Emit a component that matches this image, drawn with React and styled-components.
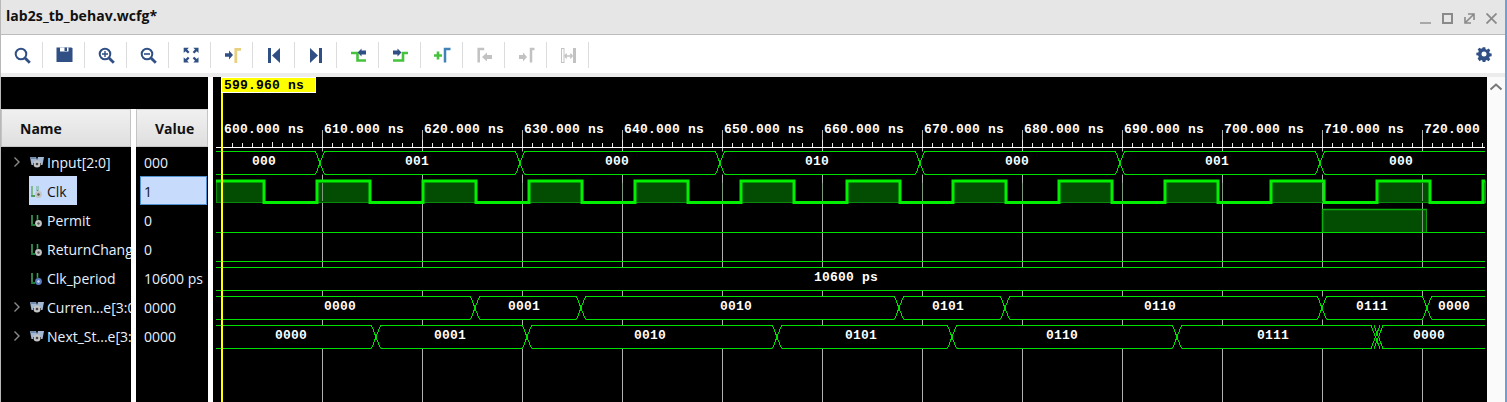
import React from "react";
import styled, { createGlobalStyle } from "styled-components";

const Global = createGlobalStyle`
  html, body { margin: 0; padding: 0; background: #fff; overflow: hidden; }
  * { box-sizing: border-box; }
`;

const UI = `"Open Sans", "Noto Sans", "Liberation Sans", sans-serif`;
const BLUE = "#2f4f85";
const GREEN = "#46c23c";
const GRAY = "#c2c2c2";

const Window = styled.div`
  width: 1507px; height: 402px; display: flex; flex-direction: column;
  border-right: 2px solid #6f9fd8; border-left: 1px solid #b8b8b8;
  background: #fff; font-family: ${UI}; overflow: hidden;
`;
const TitleBar = styled.div`
  height: 35px; flex: none; background: #e6e6e6; border-bottom: 1px solid #bcbcbc;
  display: flex; align-items: center; justify-content: space-between; padding: 0 8px 3px 5px;
`;
const Title = styled.div`font-size: 14px; font-weight: 700; color: #111; letter-spacing: 0.07px;`;
const WinButtons = styled.div`display: flex; gap: 11px; align-items: center; margin-top: 5px;`;
const Toolbar = styled.div`
  height: 38px; flex: none; display: flex; align-items: center; background: #fff; padding-right: 13px;
`;
const ToolButton = styled.div`
  width: 42px; height: 26px; flex: none; border-right: 1px solid #dcdcdc;
  display: flex; align-items: center; justify-content: center; margin-top: 1px;
`;
const Spacer = styled.div`flex: 1;`;
const Strip = styled.div`height: 4px; flex: none; background: #ececec;`;
const Main = styled.div`flex: 1; display: flex; min-height: 0; background: #fff;`;
const Left = styled.div`width: 207px; flex: none; display: flex; flex-direction: column;`;
const LeftTop = styled.div`height: 32px; flex: none; background: #000;`;
const Columns = styled.div`flex: 1; display: flex; gap: 5px; min-height: 0;`;
const Column = styled.div`
  width: ${p => p.$w}px; flex: none; background: #000; display: flex; flex-direction: column; overflow: hidden;
`;
const Header = styled.div`
  height: 38px; flex: none; background: linear-gradient(#f0f0f0, #e6e6e6 60%, #dedede);
  border: 1px solid #c4c4c4; border-top-color: #d8d8d8; font-size: 14px; font-weight: 700; color: #111;
  display: flex; align-items: center; padding-left: ${p => p.$pad}px;
`;
const Rows = styled.div`display: flex; flex-direction: column;`;
const NameRow = styled.div`
  height: 29px; flex: none; display: flex; align-items: center; color: #e6f0ff; font-size: 14px; white-space: nowrap;
`;
const Chevron = styled.div`width: 28px; flex: none; padding-left: 12px; display: flex; align-items: center;`;
const NameCell = styled.div`
  display: flex; align-items: center; height: 29px; padding: 2px 10px 0 1px; gap: 3px;
  background: ${p => (p.$sel ? "#c7dcfc" : "transparent")};
  color: ${p => (p.$sel ? "#111" : "#e6f0ff")};
`;
const ValueRow = styled.div`
  height: 29px; flex: none; display: flex; align-items: center; font-size: 14px; white-space: nowrap;
  padding: 2px 0 0 ${p => (p.$sel ? 3 : 4)}px; margin: 0 1px 0 4px;
  color: ${p => (p.$sel ? "#111" : "#e6f0ff")};
  background: ${p => (p.$sel ? "#c7dcfc" : "transparent")};
  border: ${p => (p.$sel ? "1px solid #4f92cf" : "none")};
`;
const WavePanel = styled.div`width: 1274px; flex: none; margin-left: 5px; background: #000; height: 325px;`;
const Scrollbar = styled.div`flex: 1; background: #fafafa; display: flex; justify-content: center; padding-top: 6px;`;

const WaveSvg = styled.svg`display: block;`;
const Mono = styled.text`
  font-family: "Liberation Mono", "DejaVu Sans Mono", monospace; font-weight: 700; font-size: 13px; letter-spacing: 0.2px;
  fill: ${p => p.$c || "#fff"};
`;

/* ---------- toolbar icons ---------- */
const Ico = ({ w = 20, h = 20, children }) => (
  <svg width={w} height={h} viewBox={`0 0 ${w} ${h}`} fill="none">{children}</svg>
);
const Lens = ({ children }) => (
  <Ico>
    <circle cx="9" cy="9" r="5.300" stroke={BLUE} strokeWidth="2" />
    <path d="M13 13l4.800 4.800" stroke={BLUE} strokeWidth="2.800" />
    {children}
  </Ico>
);
const IconSearch = () => <Lens />;
const IconZoomIn = () => <Lens><path d="M6 9h6M9 6v6" stroke={BLUE} strokeWidth="1.400" /></Lens>;
const IconZoomOut = () => <Lens><path d="M6 9h6" stroke={BLUE} strokeWidth="1.600" /></Lens>;
const IconSave = () => (
  <Ico>
    <path d="M2.500 2.500h15l1 1V17h-16z" fill={BLUE} />
    <path d="M6 2.500h8.500v4H6z" fill="#fff" />
    <path d="M10.500 2.500h2.500v3.500h-2.500z" fill={BLUE} />
  </Ico>
);
const IconFit = () => (
  <Ico>
    <g transform="translate(.500 -.500) scale(1.060)">
      <path d="M3 3h5L6.300 4.700 8.500 7 7 8.500 4.700 6.300 3 8zM17 3v5l-1.700-1.700L13 8.500 11.500 7l2.200-2.300L12 3zM3 17v-5l1.700 1.700L7 11.500 8.500 13l-2.200 2.300L8 17zM17 17h-5l1.700-1.700-2.200-2.300 1.500-1.500 2.300 2.200L17 12z" fill={BLUE} />
    </g>
  </Ico>
);
const IconGoCursor = () => (
  <Ico>
    <path d="M3 8.200h4V5.500l4 4.500-4 4.500V11.800H3z" fill={BLUE} />
    <path d="M13.800 18V4.300H19" stroke="#e8d080" strokeWidth="2.800" />
  </Ico>
);
const IconPrevEdge = () => (
  <Ico>
    <path d="M4 3h3v15H4z" fill={BLUE} />
    <path d="M16 3v15L8 10.500z" fill={BLUE} />
  </Ico>
);
const IconNextEdge = () => (
  <Ico>
    <path d="M13 3h3v15h-3z" fill={BLUE} />
    <path d="M4 3v15l8-7.500z" fill={BLUE} />
  </Ico>
);
const IconPrevTrans = () => (
  <Ico>
    <path d="M3 8h6.500v7.500H18" stroke={GREEN} strokeWidth="2.600" />
    <path d="M18 5.500h-4.500V3.500L9.700 7.500l3.800 4V9.500H18z" fill={BLUE} />
  </Ico>
);
const IconNextTrans = () => (
  <Ico>
    <path d="M3 15.500h10V8h5" stroke={GREEN} strokeWidth="2.600" />
    <path d="M3 5.500h4.500V3.500l4 4-4 4V9.500H3z" fill={BLUE} />
  </Ico>
);
const IconAddMarker = () => (
  <Ico>
    <path d="M2 10.500h8M6 6.500v8" stroke={GREEN} strokeWidth="2.600" />
    <path d="M13 17.500V4h5.500" stroke="#3f83b8" strokeWidth="2.500" />
  </Ico>
);
const IconPrevMarker = () => (
  <Ico>
    <path d="M4.700 17.500V4h5.500" stroke={GRAY} strokeWidth="2.500" />
    <path d="M18 10h-5V7.500L8 12l5 4.500V14h5z" fill={GRAY} />
  </Ico>
);
const IconNextMarker = () => (
  <Ico>
    <path d="M3 10h4V7.500l4 4.500-4 4.500V14H3z" fill={GRAY} />
    <path d="M15 17.500V4h3.500" stroke={GRAY} strokeWidth="2.500" />
  </Ico>
);
const IconSwap = () => (
  <Ico>
    <rect x="3.500" y="3.500" width="2.500" height="14" stroke={GRAY} strokeWidth="1" />
    <path d="M15 3h3v15h-3z" fill={GRAY} />
    <path d="M6.500 11h8M6.500 11l2.300-2.300M6.500 11l2.300 2.300M14.500 11l-2.300-2.300M14.500 11l-2.300 2.300" stroke={GRAY} strokeWidth="1.300" />
  </Ico>
);
const IconGear = () => (
  <Ico w={16} h={16}>
    <path d="M6.500 0h3l.4 2.300 1.500.6 1.900-1.300 2.100 2.100-1.300 1.900.6 1.500 2.300.4v3l-2.300.4-.6 1.500 1.300 1.900-2.100 2.100-1.900-1.300-1.500.6-.4 2.300h-3l-.4-2.300-1.500-.6-1.900 1.300L.5 13.300l1.300-1.900-.6-1.500L-1 9.500v-3l2.300-.4.6-1.500L.5 2.700l2.100-2.100 1.900 1.300 1.500-.6z" fill={BLUE} transform="translate(1.200 1.200) scale(.85)" />
    <circle cx="8" cy="8" r="2.500" fill="#fff" />
  </Ico>
);

/* ---------- signal tree icons ---------- */
const BusIcon = () => (
  <svg width="14" height="12" viewBox="0 0 14 12" fill="none">
    <path d="M0 0h6l1 3 1-3h6l-1.500 8H11V6H3v2H1.500z" fill="#a3b8d2" />
    <path d="M0 0h5.500L6 2H1z" fill="#6f8cad" />
    <circle cx="7" cy="7" r="3.500" fill="#c4c4c4" />
    <circle cx="7" cy="7" r="1.300" fill="#444" />
  </svg>
);
const SignalIcon = ({ dot = "#c4c4c4", sel }) => (
  <svg width="14" height="14" viewBox="0 0 14 14" fill="none">
    <path d="M2 1v10h3M7.500 1v5" stroke={sel ? "#4f9e5c" : "#1f7a3a"} strokeWidth="1.800" />
    <path d="M2 1v9M7.500 1v4" stroke={sel ? "#d8ecd8" : "#6fa87c"} strokeWidth=".6" />
    <circle cx="8.500" cy="9.500" r="3.400" fill={dot} />
    <circle cx="8.500" cy="9.500" r="1.200" fill={dot === "#c4c4c4" ? "#555" : "#d8e0f0"} />
  </svg>
);

const Chev = () => (
  <svg width="8" height="12" viewBox="0 0 8 12" fill="none">
    <path d="M1.500 1.500L6 6l-4.500 4.500" stroke="#8a8a8a" strokeWidth="1.400" />
  </svg>
);

/* ---------- data ---------- */
const signals = [
  { name: "Input[2:0]", value: "000", bus: true },
  { name: "Clk", value: "1", sel: true },
  { name: "Permit", value: "0" },
  { name: "ReturnChange", value: "0" },
  { name: "Clk_period", value: "10600 ps", constant: true },
  { name: "Curren...e[3:0]", value: "0000", bus: true },
  { name: "Next_St...e[3:0]", value: "0000", bus: true },
];

const X0 = 216, X1 = 1485;
const GRID = [322, 422, 522, 622, 722, 822, 922, 1022, 1122, 1222, 1322, 1422];
const ticks = Array.from({ length: 126 }, (_, i) => 232 + i * 10);
const rulerLabels = Array.from({ length: 13 }, (_, i) => ({ x: 224 + i * 100, t: `${600 + i * 10}.000${i === 12 ? "" : " ns"}` }));

const buses = [
  {
    top: 151.5, bot: 174.5,
    cross: [320, 520, 720, 920, 1120, 1320],
    labels: [[264, "000"], [417, "001"], [617, "000"], [817, "010"], [1017, "000"], [1217, "001"], [1401, "000"]],
  },
  { top: 267.5, bot: 290.5, cross: [], labels: [[846, "10600 ps"]] },
  {
    top: 296.5, bot: 319.5,
    cross: [475, 581, 899, 1005, 1322, 1427],
    labels: [[340, "0000"], [524, "0001"], [736, "0010"], [948, "0101"], [1160, "0110"], [1372, "0111"], [1454, "0000"]],
  },
  {
    top: 325.5, bot: 348.5,
    cross: [376, 527, 777, 952, 1177, 1375.5, 1378.5],
    labels: [[291, "0000"], [450, "0001"], [650, "0010"], [861, "0101"], [1062, "0110"], [1273, "0111"], [1429, "0000"]],
  },
];

const clkWave = () => {
  let d = `M216 181H264V202.500`;
  const segs = [[216, 264]];
  for (let r = 317; r < X1; r += 106) {
    const f = Math.min(r + 53, X1);
    d += `H${r}V181H${f}`;
    if (f < X1) d += `V202.500`;
    segs.push([r, f]);
  }
  return { d, segs };
};
const clk = clkWave();

const Bus = ({ top, bot, cross, labels }) => {
  const edges = [X0, ...cross, X1];
  const mid = (top + bot) / 2;
  const hw = 4.500;
  const segs = [];
  for (let i = 0; i < edges.length - 1; i++) {
    const a = edges[i] + (i === 0 ? 0 : hw);
    const b = edges[i + 1] - (i === edges.length - 2 ? 0 : hw);
    if (b > a) segs.push(`M${a} ${top}H${b}M${a} ${bot}H${b}`);
  }
  const xs = cross.map(c => `M${c - hw} ${top}L${c + hw} ${bot}M${c - hw} ${bot}L${c + hw} ${top}`);
  return (
    <g>
      <rect x={X0} y={top} width={X1 - X0} height={bot - top} fill="#000" />
      <path d={segs.join("")} stroke="#00e000" strokeWidth="1" fill="none" />
      <path d={xs.join("")} stroke="#00e000" strokeWidth="1" fill="none" shapeRendering="crispEdges" />
      {labels.map(([x, t], i) => (
        <Mono key={i} x={x} y={mid + 1.500} textAnchor="middle">{t}</Mono>
      ))}
    </g>
  );
};

const Waveform = () => (
  <WaveSvg width="1274" height="325" viewBox="213 77 1274 325">
    {GRID.map(x => (
      <path key={x} d={`M${x + 0.500} 130V402`} stroke="#b0b0b0" strokeWidth="1" />
    ))}
    {rulerLabels.map(l => <Mono key={l.x} x={l.x} y={133}>{l.t}</Mono>)}
    <path d={`M${X0} 147.500H${X1}`} stroke="#fff" strokeWidth="1" />
    {ticks.map((x, i) => (
      <path key={x} d={`M${x + 0.500} ${(i + 1) % 10 === 0 ? 140 : (i + 1) % 5 === 0 ? 142 : 143}V147`} stroke="#e8e8e8" strokeWidth="1" />
    ))}
    {clk.segs.map(([a, b]) => (
      <rect key={a} x={a + 0.500} y={181.500} width={b - a} height={21} fill="#024d02" stroke="#0a8a0a" strokeWidth="1" />
    ))}
    {GRID.map(x => <path key={x} d={`M${x + 0.500} 183V201`} stroke="#7f9a7f" strokeWidth="1" />)}
    <path d={clk.d} stroke="#00f000" strokeWidth="3" fill="none" />

    <rect x={1322} y={210} width={105} height={22} fill="#024d02" />
    {[1322, 1422].map(x => <path key={x} d={`M${x + 0.500} 210V232`} stroke="#7f9a7f" />)}
    <path d="M1322.500 232V209.500H1427" stroke="#0ab00a" strokeWidth="1.500" fill="none" />
    <path d="M1426.500 209.500V232" stroke="#0a9a0a" strokeWidth="1" fill="none" />
    <path d={`M${X0} 232.500H${X1}`} stroke="#00e000" strokeWidth="1" />
    <path d={`M${X0} 261.500H${X1}`} stroke="#00e000" strokeWidth="1" />

    {buses.map((b, i) => <Bus key={i} {...b} />)}

    <path d="M222 78V402" stroke="#ffff00" strokeWidth="2" />
    <rect x={221.500} y={77.500} width={94} height={15} fill="#ffff00" stroke="#fff" strokeWidth="1" />
    <Mono x={224} y={89} $c="#000">599.960 ns</Mono>
  </WaveSvg>
);

export default function App() {
  return (
    <Window>
      <Global />
      <TitleBar>
        <Title>lab2s_tb_behav.wcfg*</Title>
        <WinButtons>
          <svg width="11" height="11" viewBox="0 0 11 11"><path d="M0 10h11" stroke="#a8a8a8" strokeWidth="2" /></svg>
          <svg width="11" height="11" viewBox="0 0 11 11" fill="none"><rect x="1" y="1" width="9" height="9" stroke="#8a8a8a" strokeWidth="2" /></svg>
          <svg width="11" height="11" viewBox="0 0 11 11" fill="none"><path d="M4 1h6v6M1 4v6h6M9.500 1.500L2 9" stroke="#8a8a8a" strokeWidth="1.600" /></svg>
          <svg width="11" height="11" viewBox="0 0 11 11" fill="none"><path d="M.5.500l10 10M10.500.500l-10 10" stroke="#8a8a8a" strokeWidth="1.800" /></svg>
        </WinButtons>
      </TitleBar>
      <Toolbar>
        <ToolButton><IconSearch /></ToolButton>
        <ToolButton><IconSave /></ToolButton>
        <ToolButton><IconZoomIn /></ToolButton>
        <ToolButton><IconZoomOut /></ToolButton>
        <ToolButton><IconFit /></ToolButton>
        <ToolButton><IconGoCursor /></ToolButton>
        <ToolButton><IconPrevEdge /></ToolButton>
        <ToolButton><IconNextEdge /></ToolButton>
        <ToolButton><IconPrevTrans /></ToolButton>
        <ToolButton><IconNextTrans /></ToolButton>
        <ToolButton><IconAddMarker /></ToolButton>
        <ToolButton><IconPrevMarker /></ToolButton>
        <ToolButton><IconNextMarker /></ToolButton>
        <ToolButton><IconSwap /></ToolButton>
        <Spacer />
        <IconGear />
      </Toolbar>
      <Strip />
      <Main>
        <Left>
          <LeftTop />
          <Columns>
            <Column $w={130}>
              <Header $pad={18}>Name</Header>
              <Rows>
                {signals.map(s => (
                  <NameRow key={s.name}>
                    <Chevron>{s.bus && <Chev />}</Chevron>
                    <NameCell $sel={s.sel}>
                      {s.bus ? <BusIcon /> : <SignalIcon sel={s.sel} dot={s.constant ? "#5a7fc0" : "#c4c4c4"} />}
                      {s.name}
                    </NameCell>
                  </NameRow>
                ))}
              </Rows>
            </Column>
            <Column $w={72}>
              <Header $pad={18}>Value</Header>
              <Rows>
                {signals.map(s => (
                  <ValueRow key={s.name} $sel={s.sel}>{s.value}</ValueRow>
                ))}
              </Rows>
            </Column>
          </Columns>
        </Left>
        <WavePanel><Waveform /></WavePanel>
        <Scrollbar>
          <svg width="14" height="8" viewBox="0 0 14 8" fill="none"><path d="M1.500 6.500L7 1.500l5.500 5" stroke="#777" strokeWidth="2" /></svg>
        </Scrollbar>
      </Main>
    </Window>
  );
}
